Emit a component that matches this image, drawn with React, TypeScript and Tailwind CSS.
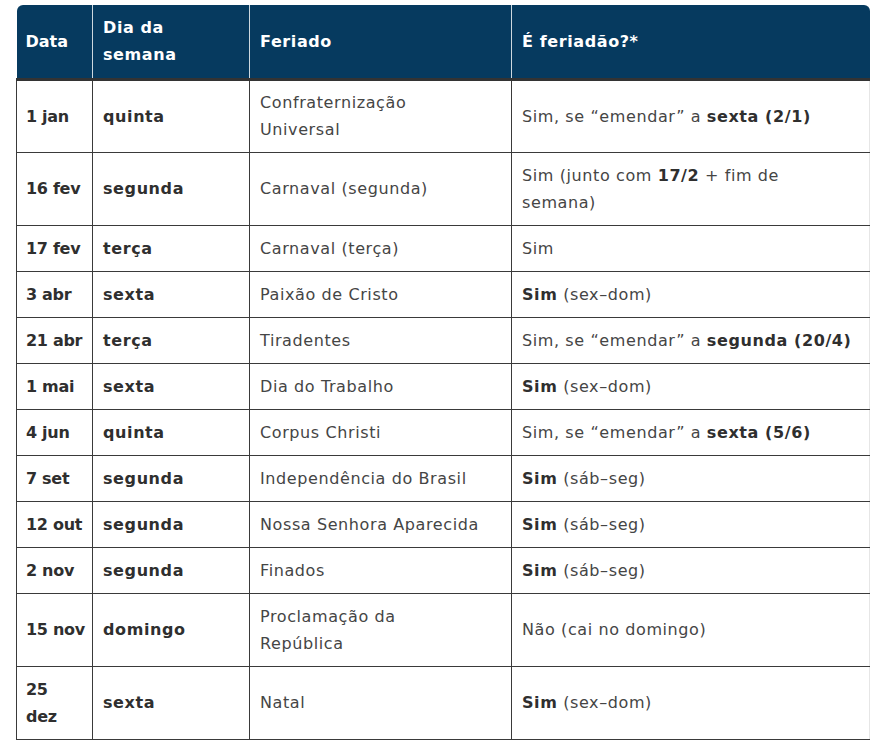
import React from "react";

type Row = {
  date: React.ReactNode;
  day: string;
  name: React.ReactNode;
  answer: React.ReactNode;
  tall?: boolean;
};

const B = ({ children }: { children: React.ReactNode }) => (
  <strong className="font-semibold text-[#2f2f2f]">{children}</strong>
);

const rows: Row[] = [
  { date: "1 jan", day: "quinta", name: <>Confraternização<br />Universal</>, answer: <>Sim, se “emendar” a <B>sexta (2/1)</B></>, tall: true },
  { date: "16 fev", day: "segunda", name: "Carnaval (segunda)", answer: <>Sim (junto com <B>17/2</B> + fim de<br />semana)</>, tall: true },
  { date: "17 fev", day: "terça", name: "Carnaval (terça)", answer: "Sim" },
  { date: "3 abr", day: "sexta", name: "Paixão de Cristo", answer: <><B>Sim</B> (sex–dom)</> },
  { date: "21 abr", day: "terça", name: "Tiradentes", answer: <>Sim, se “emendar” a <B>segunda (20/4)</B></> },
  { date: "1 mai", day: "sexta", name: "Dia do Trabalho", answer: <><B>Sim</B> (sex–dom)</> },
  { date: "4 jun", day: "quinta", name: "Corpus Christi", answer: <>Sim, se “emendar” a <B>sexta (5/6)</B></> },
  { date: "7 set", day: "segunda", name: "Independência do Brasil", answer: <><B>Sim</B> (sáb–seg)</> },
  { date: "12 out", day: "segunda", name: "Nossa Senhora Aparecida", answer: <><B>Sim</B> (sáb–seg)</> },
  { date: "2 nov", day: "segunda", name: "Finados", answer: <><B>Sim</B> (sáb–seg)</> },
  { date: "15 nov", day: "domingo", name: <>Proclamação da<br />República</>, answer: "Não (cai no domingo)", tall: true },
  { date: <>25<br />dez</>, day: "sexta", name: "Natal", answer: <><B>Sim</B> (sex–dom)</>, tall: true },
];

export default function App() {
  return (
    <div className="min-h-[749px] bg-white pt-[5px] pl-[16px]" style={{ fontFamily: '"DejaVu Sans", "Noto Sans", sans-serif' }}>
      <table className="w-[853px] table-fixed border-collapse text-[16px] leading-[27px] tracking-[0.6px] text-[#454545]">
        <colgroup>
          <col className="w-[76px]" />
          <col className="w-[157px]" />
          <col className="w-[262px]" />
          <col className="w-[358px]" />
        </colgroup>
        <thead>
          <tr className="h-[74px] bg-[#063a5f] text-left font-semibold text-white">
            <th className="rounded-tl-[6px] border-b-[3px] border-r border-b-[#333333] border-r-white/80 pl-[9px] pr-[4px] align-middle font-semibold tracking-normal">Data</th>
            <th className="border-b-[3px] border-r border-b-[#333333] border-r-white/80 px-[10px] align-middle font-semibold">Dia da<br />semana</th>
            <th className="border-b-[3px] border-r border-b-[#333333] border-r-white/80 px-[10px] align-middle font-semibold">Feriado</th>
            <th className="rounded-tr-[6px] border-b-[3px] border-b-[#333333] px-[10px] align-middle font-semibold">É feriadão?*</th>
          </tr>
        </thead>
        <tbody>
          {rows.map((r, i) => (
            <tr key={i} className={r.tall ? "h-[73px]" : "h-[46px]"}>
              <td className="whitespace-nowrap border border-[#3a3a3a] pl-[9px] pr-[2px] align-middle font-semibold tracking-[-0.3px] text-[#2f2f2f]">{r.date}</td>
              <td className="whitespace-nowrap border border-[#3a3a3a] px-[10px] align-middle font-semibold text-[#2f2f2f]">{r.day}</td>
              <td className="whitespace-nowrap border border-[#3a3a3a] px-[10px] align-middle">{r.name}</td>
              <td className="whitespace-nowrap border-y border-l border-r border-y-[#3a3a3a] border-l-[#3a3a3a] border-r-[#e6e6e6] px-[10px] align-middle">{r.answer}</td>
            </tr>
          ))}
        </tbody>
      </table>
    </div>
  );
}
